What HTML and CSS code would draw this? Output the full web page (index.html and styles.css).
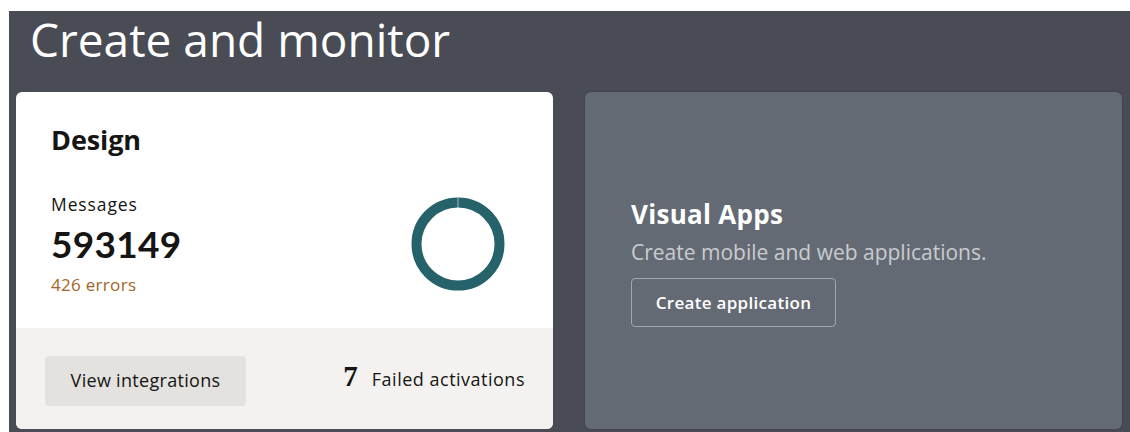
FILE: index.html
```html
<!DOCTYPE html>
<html lang="en">
<head>
<meta charset="utf-8">
<title>Create and monitor</title>
<link rel="stylesheet" href="styles.css">
</head>
<body>
<section class="panel">
  <h1 class="panel-title">Create and monitor</h1>
  <div class="cards">
    <article class="card card-design">
      <div class="card-body">
        <h2 class="card-title">Design</h2>
        <div class="stats">
          <div class="stat-text">
            <div class="stat-label">Messages</div>
            <div class="stat-value">593149</div>
            <div class="stat-errors">426 errors</div>
          </div>
          <svg class="donut" width="94" height="94" viewBox="0 0 94 94">
            <circle cx="47" cy="47" r="41.5" fill="none" stroke="#25626a" stroke-width="10"/>
            <line x1="47" y1="1" x2="47" y2="11" stroke="#ffffff" stroke-width="0.8" opacity="0.7"/>
          </svg>
        </div>
      </div>
      <div class="card-footer">
        <button class="btn btn-neutral">View integrations</button>
        <div class="failed"><span class="failed-count">7</span><span class="failed-label">Failed activations</span></div>
      </div>
    </article>
    <article class="card card-apps">
      <div class="apps-content">
        <h2 class="apps-title">Visual Apps</h2>
        <p class="apps-desc">Create mobile and web applications.</p>
        <button class="btn btn-outline">Create application</button>
      </div>
    </article>
  </div>
</section>
</body>
</html>
```

FILE: styles.css
```css
html, body {
  margin: 0;
  padding: 0;
  background: #ffffff;
}

body {
  padding: 11px 0 0 9px;
  font-family: "Open Sans", "Noto Sans", sans-serif;
  overflow: hidden;
}

.panel {
  background: #494c54;
  padding: 0 9px 6px 7px;
  height: 430px;
  box-sizing: border-box;
}

.panel-title {
  margin: 0;
  padding: 0 0 0 14px;
  height: 81px;
  font-family: "Open Sans", sans-serif;
  font-weight: 400;
  font-size: 46px;
  line-height: 57px;
  color: #ffffff;
}

.cards {
  display: grid;
  grid-template-columns: 537px 537px;
  column-gap: 32px;
  height: 337px;
}

.card {
  border-radius: 6px;
  overflow: hidden;
  box-sizing: border-box;
}

.card-design {
  background: #ffffff;
  display: flex;
  flex-direction: column;
}

.card-body {
  flex: 1;
  padding: 30px 0 0 35px;
}

.card-title {
  margin: 0;
  font-family: "Open Sans", sans-serif;
  font-weight: 700;
  font-size: 27px;
  line-height: 36px;
  letter-spacing: -0.1px;
  color: #161513;
}

.stats {
  display: flex;
  align-items: flex-start;
  justify-content: space-between;
  padding-right: 48px;
  margin-top: 35px;
}

.stat-label {
  font-family: "Open Sans", sans-serif;
  font-size: 17.5px;
  line-height: 22px;
  letter-spacing: 0.9px;
  color: #161513;
}

.stat-value {
  font-family: "Lato", sans-serif;
  font-weight: 700;
  font-size: 37px;
  line-height: 44px;
  letter-spacing: 0.3px;
  color: #161513;
  margin-top: 7px;
}

.stat-errors {
  font-family: "Open Sans", sans-serif;
  font-size: 17px;
  line-height: 22px;
  letter-spacing: 0.3px;
  color: #a5652a;
  margin-top: 8px;
}

.donut {
  display: block;
  margin-top: 4px;
}

.card-footer {
  height: 101px;
  background: #f3f2f1;
  display: flex;
  align-items: center;
  justify-content: space-between;
  padding: 5px 28px 0 29px;
  box-sizing: border-box;
}

.btn {
  font-family: "Open Sans", sans-serif;
  font-size: 17px;
  cursor: pointer;
  border-radius: 4px;
  height: 50px;
  box-sizing: border-box;
}

.btn-neutral {
  background: #e4e2df;
  border: none;
  color: #161513;
  width: 201px;
  padding: 0 0 2px;
  font-size: 18px;
  letter-spacing: 0.3px;
}

.failed {
  display: flex;
  align-items: baseline;
  color: #161513;
  padding-bottom: 10px;
}

.failed-count {
  font-family: "Liberation Serif", serif;
  font-weight: 700;
  font-size: 29px;
  margin-right: 14px;
}

.failed-label {
  font-family: "Open Sans", sans-serif;
  font-size: 18px;
  letter-spacing: 0.5px;
}

.card-apps {
  background: #646a74;
  display: flex;
  align-items: center;
  padding-left: 46px;
  box-shadow: 0 0 2px rgba(0, 0, 0, 0.25);
}

.apps-content {
  margin-top: 3px;
}

.apps-title {
  margin: 0;
  font-family: "Open Sans", sans-serif;
  font-weight: 700;
  font-size: 26px;
  line-height: 32px;
  letter-spacing: 0.3px;
  color: #ffffff;
}

.apps-desc {
  margin: 8px 0 12px;
  font-family: "Open Sans", sans-serif;
  font-size: 21px;
  line-height: 28px;
  color: #c9ccd0;
}

.btn-outline {
  background: transparent;
  border: 1px solid #a3a7ad;
  color: #ffffff;
  font-weight: 600;
  width: 205px;
  height: 49px;
  padding: 0;
  letter-spacing: 0.3px;
}
```
